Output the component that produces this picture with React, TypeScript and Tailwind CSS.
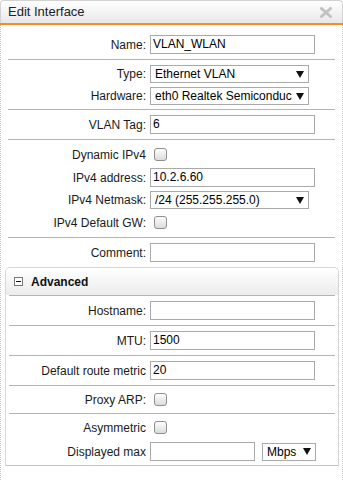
import React from 'react'

const font = "font-['Liberation_Sans',Arial,sans-serif]"

function Arrow() {
  return (
    <svg width="8" height="7" viewBox="0 0 8 7" className="shrink-0">
      <path d="M0 0 H8 L4 7 Z" fill="#111" />
    </svg>
  )
}

function TextBox({ value = '', w = 'w-[165px]' }: { value?: string; w?: string }) {
  return (
    <div className={`${w} h-[19px] border border-[#a9a9a9] bg-white px-[2px] leading-[17px] text-black whitespace-nowrap overflow-hidden`}>
      {value}
    </div>
  )
}

function Select({ value, w = 'w-[159px]' }: { value: string; w?: string }) {
  return (
    <div className={`${w} h-[18px] border border-[#a9a9a9] bg-white flex items-center justify-between gap-[3px] pl-[4px] pr-[4px] leading-[16px] text-black`}>
      <span className="whitespace-nowrap">{value}</span>
      <Arrow />
    </div>
  )
}

function Check() {
  return (
    <div className="ml-[4px] w-[13px] h-[13px] rounded-[3px] border border-[#8f8f8f] bg-gradient-to-b from-[#fdfdfd] to-[#dcdcdc]" />
  )
}

function Row({ label, lw, children }: { label: string; lw: string; children: React.ReactNode }) {
  return (
    <div className="flex items-center h-[19px]">
      <div className={`${lw} text-right whitespace-nowrap text-[#1a1a1a]`}>{label}</div>
      <div className="ml-[4px] flex items-center">{children}</div>
    </div>
  )
}

function Divider({ inset }: { inset: string }) {
  return <div className={`${inset} h-px bg-[#b4b4b4]`} />
}

export default function App() {
  const lw = 'w-[145px]'
  const aw = 'w-[140px]'
  return (
    <div className={`${font} text-[12px] w-[343px] h-[480px] bg-white flex flex-col overflow-hidden`}>
      {/* title bar */}
      <div className="h-[23px] shrink-0 rounded-t-[4px] border border-b-0 border-[#d2d2d2] bg-gradient-to-b from-white to-[#e8e8e8] flex items-center justify-between pl-[7px] pr-[10px]">
        <span className="text-[13px] text-[#222]">Edit Interface</span>
        <svg width="12" height="11" viewBox="0 0 12 11">
          <path d="M1.5 1.5 L10.5 9.5 M10.5 1.5 L1.5 9.5" stroke="#c2c2c2" strokeWidth="3" strokeLinecap="round" />
        </svg>
      </div>
      <div className="h-[2px] shrink-0 bg-[#f5901e]" />

      <div className="flex-1 border-x border-dotted border-[#c4c4c4]">
        <div className="pt-[10px] pb-[5px]">
          <Row label="Name:" lw={lw}><TextBox value="VLAN_WLAN" /></Row>
        </div>
        <Divider inset="mx-[7px]" />
        <div className="pt-[5px] pb-[4px] flex flex-col gap-[4px]">
          <div className="flex items-center h-[18px]">
            <div className={`${lw} text-right text-[#1a1a1a]`}>Type:</div>
            <div className="ml-[4px]"><Select value="Ethernet VLAN" /></div>
          </div>
          <div className="flex items-center h-[18px]">
            <div className={`${lw} text-right text-[#1a1a1a]`}>Hardware:</div>
            <div className="ml-[4px]"><Select value="eth0 Realtek Semiconduc" /></div>
          </div>
        </div>
        <Divider inset="mx-[7px]" />
        <div className="pt-[5px] pb-[5px]">
          <Row label="VLAN Tag:" lw={lw}><TextBox value="6" /></Row>
        </div>
        <Divider inset="mx-[7px]" />
        <div className="pt-[5px] pb-[5px] flex flex-col gap-[4px]">
          <Row label="Dynamic IPv4" lw={lw}><Check /></Row>
          <Row label="IPv4 address:" lw={lw}><TextBox value="10.2.6.60" /></Row>
          <div className="flex items-center h-[18px]">
            <div className={`${lw} text-right text-[#1a1a1a]`}>IPv4 Netmask:</div>
            <div className="ml-[4px]"><Select value="/24 (255.255.255.0)" /></div>
          </div>
          <Row label="IPv4 Default GW:" lw={lw}><Check /></Row>
        </div>
        <Divider inset="mx-[7px]" />
        <div className="pt-[5px]">
          <Row label="Comment:" lw={lw}><TextBox /></Row>
        </div>

        {/* Advanced */}
        <div className="mt-[5px] ml-[4px] mr-[3px] rounded-t-[5px] border border-[#d6d6d6] border-b-dotted border-b-[#c4c4c4]">
          <div className="h-[27px] rounded-t-[4px] bg-gradient-to-b from-white to-[#ececec] flex items-center pl-[8px]">
            <div className="w-[9px] h-[9px] border border-[#777] bg-white flex items-center justify-center">
              <div className="w-[5px] h-px bg-[#111]" />
            </div>
            <span className="ml-[8px] font-bold text-[#111]">Advanced</span>
          </div>
          <Divider inset="mx-[3px]" />
          <div className="pt-[5px] pb-[5px]">
            <Row label="Hostname:" lw={aw}><TextBox /></Row>
          </div>
          <Divider inset="mx-[3px]" />
          <div className="pt-[5px] pb-[5px]">
            <Row label="MTU:" lw={aw}><TextBox value="1500" /></Row>
          </div>
          <Divider inset="mx-[3px]" />
          <div className="pt-[5px] pb-[5px]">
            <Row label="Default route metric" lw={aw}><TextBox value="20" /></Row>
          </div>
          <Divider inset="mx-[3px]" />
          <div className="pt-[4px] pb-[4px]">
            <Row label="Proxy ARP:" lw={aw}><Check /></Row>
          </div>
          <Divider inset="mx-[3px]" />
          <div className="pt-[4px] pb-[4px] flex flex-col gap-[5px]">
            <Row label="Asymmetric" lw={aw}><Check /></Row>
            <Row label="Displayed max" lw={aw}>
              <TextBox w="w-[105px]" />
              <div className="ml-[7px]"><Select value="Mbps" w="w-[54px]" /></div>
            </Row>
          </div>
        </div>
      </div>
    </div>
  )
}
